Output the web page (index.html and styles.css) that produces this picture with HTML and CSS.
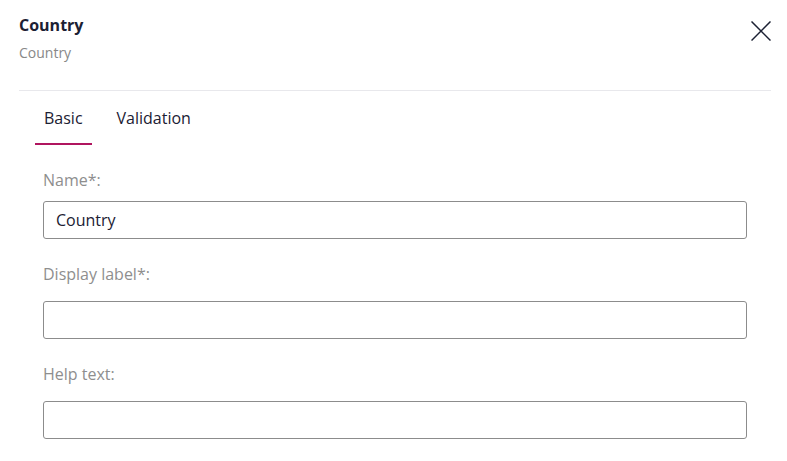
FILE: index.html
```html
<!DOCTYPE html>
<html lang="en">

<head>
    <meta charset="UTF-8">
    <meta name="viewport" content="width=device-width, initial-scale=1.0">
    <title>Country</title>
    <link rel="stylesheet" href="styles.css">
</head>

<body>
    <div class="panel">
        <div class="header">
            <div class="titles">
                <h1>Country</h1>
                <p>Country</p>
            </div>
            <button class="close" aria-label="Close">
                <svg width="20" height="20" viewBox="0 0 20 20">
                    <path d="M0.5 0.5 L19.5 19.5 M19.5 0.5 L0.5 19.5" stroke="#1b2033" stroke-width="1.5" fill="none" />
                </svg>
            </button>
        </div>

        <div class="tabs">
            <div class="tab active">Basic</div>
            <div class="tab">Validation</div>
        </div>

        <form class="fields">
            <div class="field first">
                <label for="name">Name*:</label>
                <input id="name" type="text" value="Country">
            </div>
            <div class="field">
                <label for="label">Display label*:</label>
                <input id="label" type="text">
            </div>
            <div class="field">
                <label for="help">Help text:</label>
                <input id="help" type="text">
            </div>
        </form>
    </div>
</body>

</html>
```

FILE: styles.css
```css
body {
    margin: 0;
    background: #fff;
    font-family: "Open Sans", "Noto Sans", sans-serif;
    color: #1b2033;
}

.panel {
    padding: 0 16px 0 19px;
}

.header {
    display: flex;
    justify-content: space-between;
    align-items: flex-start;
    border-bottom: 1px solid #e8e8ec;
    height: 90px;
}

.titles h1 {
    margin: 14px 0 0;
    font-size: 16px;
    line-height: 22px;
    font-weight: 700;
}

.titles p {
    margin: 7px 0 0;
    font-size: 14px;
    line-height: 19px;
    color: #888;
}

.close {
    border: none;
    background: none;
    padding: 0;
    margin: 21px 0 0 0;
    width: 20px;
    height: 20px;
    cursor: pointer;
}

.close svg {
    display: block;
}

.tabs {
    display: flex;
    padding-left: 16px;
    margin-top: 14px;
}

.tab {
    font-size: 16px;
    line-height: 22px;
    padding: 2px 9px 14px;
    margin-right: 16px;
    border-bottom: 2px solid transparent;
}

.tab.active {
    border-bottom-color: #b0155f;
}

.fields {
    padding: 0 24px;
    margin: 0;
}

.field {
    display: flex;
    flex-direction: column;
}

.field label {
    font-size: 16px;
    line-height: 22px;
    color: #8e8e8e;
    margin-top: 24px;
    margin-bottom: 16px;
}

.field.first label {
    margin-top: 24px;
    margin-bottom: 10px;
}

.field input {
    height: 38px;
    box-sizing: border-box;
    border: 1px solid #8c8c8c;
    border-radius: 3px;
    padding: 0 12px;
    font-family: "Open Sans", "Noto Sans", sans-serif;
    font-size: 16px;
    color: #1b2033;
    outline: none;
}
```
